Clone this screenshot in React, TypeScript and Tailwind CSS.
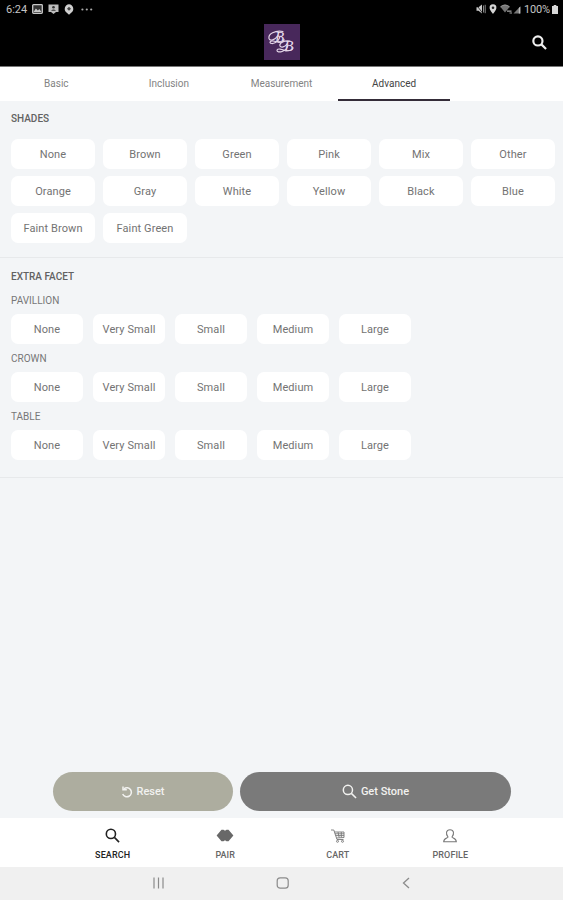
import React from 'react';

const tabs = ['Basic', 'Inclusion', 'Measurement', 'Advanced'];

const shades = [
  'None', 'Brown', 'Green', 'Pink', 'Mix', 'Other',
  'Orange', 'Gray', 'White', 'Yellow', 'Black', 'Blue',
  'Faint Brown', 'Faint Green',
];

const facets = ['PAVILLION', 'CROWN', 'TABLE'];
const sizes = ['None', 'Very Small', 'Small', 'Medium', 'Large'];

// Magnifier used in the header, the button and the bottom bar
const SearchIcon: React.FC<{ className?: string; weight?: number }> = ({ className, weight = 2 }) => (
  <svg viewBox="0 0 16 16" fill="none" stroke="currentColor" strokeWidth={weight} className={className}>
    <circle cx="6.3" cy="6.3" r="4.9" />
    <path d="M10 10l5 5" />
  </svg>
);

const StatusBar: React.FC = () => (
  <div className="flex h-[18px] items-center justify-between pl-1.5 pr-[5px] text-[11px] text-[#c4c4c4]">
    <div className="flex items-center">
      <span className="w-[26px] pt-0.5">6:24</span>
      {/* Gallery */}
      <svg viewBox="0 0 11 10" className="h-2.5 w-[11px]">
        <rect x="0.7" y="0.7" width="9.6" height="8.6" rx="0.8" fill="#333" stroke="#c8c8c8" strokeWidth="1.3" />
        <path d="M1.5 8l2.4-3.5 2 2 1.4-1.6L9.5 8z" fill="#c8c8c8" />
      </svg>
      {/* Cast notification */}
      <svg viewBox="0 0 11 10" className="ml-[5px] h-2.5 w-[11px]">
        <path d="M0.5 0.5h10v7.5H8L5.5 10 3 8H0.5z" fill="#bdbdbd" />
        <circle cx="5.5" cy="3.3" r="1.3" fill="#333" />
        <path d="M3 6.7q2.5-2.6 5 0z" fill="#333" />
      </svg>
      {/* Location badge */}
      <svg viewBox="0 0 10 11" className="ml-[5px] h-[11px] w-2.5">
        <path d="M5 0.3a4.6 4.6 0 0 1 2.5 8.2L5 10.8 2.5 8.5A4.6 4.6 0 0 1 5 0.3z" fill="#cfcfcf" />
        <path d="M5 2.8L7 4.8 5 6.8 3 4.8z" fill="#444" />
      </svg>
      <svg viewBox="0 0 12 3" className="ml-[7px] h-[3px] w-3" fill="#aaa">
        <circle cx="1.4" cy="1.5" r="1.1" />
        <circle cx="5.8" cy="1.5" r="1.1" />
        <circle cx="10.2" cy="1.5" r="1.1" />
      </svg>
    </div>
    <div className="flex items-center">
      {/* Muted */}
      <svg viewBox="0 0 10 10" className="h-2.5 w-2.5">
        <path d="M0.5 3.3h2L6 0.5v9L2.5 6.7h-2z" fill="#c8c8c8" />
        <path d="M0.5 1l6 8" stroke="#000" strokeWidth="0.7" />
        <path d="M7.5 1.5v7M9.2 0.8v8.4" stroke="#999" strokeWidth="0.9" />
      </svg>
      <svg viewBox="0 0 8 10" className="ml-[3px] h-2.5 w-2">
        <path d="M4 0.3a3.4 3.4 0 0 1 3.4 3.6C7.4 6 4 9.8 4 9.8S0.6 6 0.6 3.9A3.4 3.4 0 0 1 4 0.3z" fill="#d4d4d4" />
        <circle cx="4" cy="3.7" r="1.3" fill="#222" />
      </svg>
      {/* Wifi */}
      <svg viewBox="0 0 13 10" className="ml-[3px] h-2.5 w-[13px]">
        <path d="M0.3 2.7Q5 -1 9.7 2.7L5 8.5z" fill="#747474" />
        <path d="M0.5 2.8Q5-0.8 9.5 2.8" fill="none" stroke="#999" />
        <path d="M7 7.2h4.5M9.5 9h2.5" stroke="#a5a5a5" strokeWidth="1.2" />
      </svg>
      {/* Signal */}
      <svg viewBox="0 0 8 9" className="h-[9px] w-2">
        <path d="M0.5 8.6L7.3 1.5v7.1z" fill="#777" />
        <path d="M5.8 3v5.6h1.5V1.5z" fill="#bbb" />
      </svg>
      <span className="ml-[3px] w-[28px] pt-0.5 tracking-[-0.15px]">100%</span>
      <svg viewBox="0 0 6 9" className="h-[9px] w-1.5" fill="#d8d8d8">
        <path d="M1.7 0h2.6v1H6v8H0V1h1.7z" />
      </svg>
    </div>
  </div>
);

// Purple monogram
const Logo: React.FC = () => (
  <svg viewBox="0 0 36 36" className="h-9 w-9">
    <rect width="36" height="36" fill="#48285b" />
    <g fill="#e9dcec" fontFamily="Liberation Serif, serif" fontStyle="italic" fontSize="15">
      <text x="11" y="18">B</text>
      <text x="20.300" y="27">B</text>
    </g>
    <g fill="none" stroke="#e4d5e8" strokeWidth="1.200" strokeLinecap="round">
      <path d="M19 7.500C11 6 4 10 5 14.500c1 3 6 1.500 9-3" />
      <path d="M16 12c-1 7-9 9-10 6.500 0-2.500 5-1.500 9 0 3 0 5-1 5-3" />
      <path d="M26 17c-6-1-11 2-10 5 1 2 5 1 7-2" />
      <path d="M24 21c-1 7-11 8.500-11 5.500 0-2.500 5-1.500 9 .5 4 0 6-1 7-3" />
    </g>
  </svg>
);

const Chip: React.FC<{ label: string; className: string }> = ({ label, className }) => (
  <div className={`flex h-[30px] items-center justify-center whitespace-nowrap rounded-[7px] bg-white pt-[2px] text-[11px] tracking-[0.1px] text-[#737373] ${className}`}>
    {label}
  </div>
);

const PairIcon: React.FC = () => (
  <svg viewBox="0 0 18 13" className="h-[13px] w-[18px]" fill="#686868">
    <path d="M0.6 6.5L5.500 0.8h2L9 1.800l1.500-1h2l4.900 5.700-4.900 5.700h-2L9 11.200l-1.500 1h-2z" />
  </svg>
);

const CartIcon: React.FC = () => (
  <svg viewBox="0 0 16 16" className="h-4 w-4" fill="none" stroke="#777" strokeWidth="0.9">
    <path d="M1 2h2.800l3.200 9.500h6.500M4.300 4h9.700v5.500l-7.500.5M4.800 5.800H14M5.500 7.600H14M8 4l1.200 5.600M11.300 4v5.400" />
    <circle cx="7.500" cy="13.300" r="1" />
    <circle cx="12.500" cy="13.300" r="1" />
  </svg>
);

const ProfileIcon: React.FC = () => (
  <svg viewBox="0 0 16 16" className="h-4 w-4" fill="none" stroke="#777" strokeWidth="1.100">
    <path d="M6 9C3.500 6 4 1.700 8 1.700S12.500 6 10 9c0 1.300 4.300 1 4.300 4.800H1.700C1.700 10 6 10.300 6 9z" />
  </svg>
);

const navItems = [
  { label: 'SEARCH', icon: <SearchIcon className="h-[15px] w-[15px]" weight={1.7} />, color: 'text-[#222]' },
  { label: 'PAIR', icon: <PairIcon />, color: 'text-[#666]' },
  { label: 'CART', icon: <CartIcon />, color: 'text-[#666]' },
  { label: 'PROFILE', icon: <ProfileIcon />, color: 'text-[#666]' },
];

const App: React.FC = () => {
  return (
    <div className="flex h-[900px] w-[563px] flex-col overflow-hidden bg-[#f3f5f7] font-['Roboto',sans-serif]">
      {/* Header */}
      <header className="h-[67px] shrink-0 border-b border-[#777] bg-black">
        <StatusBar />
        <div className="grid h-12 grid-cols-3 items-center px-4">
          <span />
          <div className="flex justify-center">
            <Logo />
          </div>
          <div className="flex justify-end text-[#eee]">
            <SearchIcon className="h-[15px] w-[15px]" weight={2.3} />
          </div>
        </div>
      </header>

      {/* Tabs */}
      <nav className="grid h-[34px] shrink-0 grid-cols-5 bg-white text-[10px]">
        {tabs.map((tab) => (
          <div
            key={tab}
            className={`flex items-center justify-center border-b-2 pt-px ${tab === 'Advanced' ? 'border-[#342c38] text-[#444]' : 'border-transparent text-[#838383]'}`}
          >
            {tab}
          </div>
        ))}
      </nav>

      <main className="flex flex-1 flex-col">
        {/* Shades */}
        <section className="h-[157px] border-b border-[#e7e9eb] pl-[11px] pt-2.5">
          <h2 className="text-[10px] font-medium leading-4 text-[#626262]">SHADES</h2>
          <div className="mt-3 flex flex-wrap gap-x-2 gap-y-[7px]">
            {shades.map((shade) => (
              <Chip key={shade} label={shade} className="w-[84px]" />
            ))}
          </div>
        </section>

        {/* Extra facet */}
        <section className="h-[220px] border-b border-[#e7e9eb] pl-[11px] pt-[11px]">
          <h2 className="text-[10px] font-medium leading-4 text-[#626262]">EXTRA FACET</h2>
          <div className="mt-2 flex flex-col gap-[7px]">
            {facets.map((facet) => (
              <div key={facet}>
                <h3 className="text-[10px] leading-4 text-[#777]">{facet}</h3>
                <div className="mt-[5px] flex gap-2.5">
                  {sizes.map((size) => (
                    <Chip key={size} label={size} className="w-[72px]" />
                  ))}
                </div>
              </div>
            ))}
          </div>
        </section>

        {/* Actions */}
        <div className="mb-[7px] mt-auto flex gap-[7px] pl-[53px] text-[11px] font-medium text-[#f2f2f0]">
          <button className="flex h-[39px] w-[180px] items-center justify-center gap-[3px] rounded-full bg-[#adad9f]">
            <svg viewBox="0 0 12 12" className="h-3 w-3" fill="none" stroke="currentColor" strokeWidth="1.500">
              <path d="M3 2.800a4.500 4.500 0 1 1-1.300 5.200" />
              <path d="M2 0.500v3.300h3.800" />
            </svg>
            <span className="pt-0.5">Reset</span>
          </button>
          <button className="flex h-[39px] w-[271px] items-center justify-center gap-1 rounded-full bg-[#7a7a7a]">
            <SearchIcon className="h-[15px] w-[15px]" weight={1.6} />
            <span className="pt-0.5">Get Stone</span>
          </button>
        </div>
      </main>

      {/* Bottom bar */}
      <nav className="grid h-[49px] shrink-0 grid-cols-[repeat(4,112.600px)] justify-center bg-white">
        {navItems.map((item) => (
          <div key={item.label} className={`flex flex-col items-center pt-[9px] text-[9px] font-medium tracking-[0.1px] ${item.color}`}>
            <div className="flex h-[17px] items-center">{item.icon}</div>
            <span className="mt-1 leading-[14px]">{item.label}</span>
          </div>
        ))}
      </nav>

      {/* Android navigation */}
      <div className="flex h-[33px] shrink-0 items-center justify-between bg-[#f0f0f0] pb-px pl-[152px] pr-[150px]">
        <svg viewBox="0 0 14 14" className="h-3.5 w-3.5" stroke="#8b8b8b" strokeWidth="1.200">
          <path d="M2 1.500v11M6.500 1.500v11M11 1.500v11" />
        </svg>
        <svg viewBox="0 0 14 14" className="h-3.5 w-3.5" fill="none" stroke="#8b8b8b" strokeWidth="1.200">
          <rect x="1.200" y="1.800" width="11" height="10.400" rx="3" />
        </svg>
        <svg viewBox="0 0 14 14" className="h-3.5 w-3.5" fill="none" stroke="#8b8b8b" strokeWidth="1.300">
          <path d="M10 2L4.500 7l5.500 5" />
        </svg>
      </div>
    </div>
  );
};

export default App;
